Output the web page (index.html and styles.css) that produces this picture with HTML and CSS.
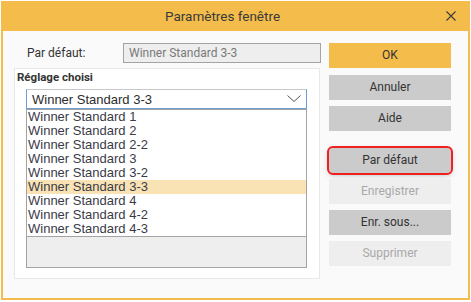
FILE: index.html
```html
<!DOCTYPE html>
<html>
	<head>
		<meta charset="utf-8">
		<title>Paramètres fenêtre</title>
		<link rel="stylesheet" href="styles.css">
	</head>
	<body>
		<!-- fenêtre -->
		<div class="window">
			<div class="titlebar">
				<div class="title">Paramètres fenêtre</div>
				<div class="close">
					<svg width="10" height="10" viewBox="0 0 10 10">
						<path d="M0.5 0.5 L9.5 9.5 M9.5 0.5 L0.5 9.5" stroke="#3a3a3a" stroke-width="1.1" fill="none"/>
					</svg>
				</div>
			</div>

			<div class="content">
				<!-- colonne gauche -->
				<div class="left">
					<div class="row">
						<span class="label">Par défaut:</span>
						<div class="readonly">Winner Standard 3-3</div>
					</div>

					<div class="group">
						<div class="group-title">Réglage choisi</div>
						<div class="combo">
							<span>Winner Standard 3-3</span>
							<svg width="14" height="7" viewBox="0 0 14 7">
								<path d="M0.5 0.5 L7 6.5 L13.5 0.5" stroke="#555" stroke-width="1" fill="none"/>
							</svg>
						</div>
						<div class="listbox">
							<ul class="items">
								<li>Winner Standard 1</li>
								<li>Winner Standard 2</li>
								<li>Winner Standard 2-2</li>
								<li>Winner Standard 3</li>
								<li>Winner Standard 3-2</li>
								<li class="selected">Winner Standard 3-3</li>
								<li>Winner Standard 4</li>
								<li>Winner Standard 4-2</li>
								<li>Winner Standard 4-3</li>
							</ul>
							<div class="empty"></div>
						</div>
					</div>
				</div>

				<!-- boutons -->
				<div class="buttons">
					<a class="btn primary" href="javascript:;">OK</a>
					<a class="btn" href="javascript:;">Annuler</a>
					<a class="btn" href="javascript:;">Aide</a>
					<a class="btn focused" href="javascript:;">Par défaut</a>
					<a class="btn disabled" href="javascript:;">Enregistrer</a>
					<a class="btn" href="javascript:;">Enr. sous...</a>
					<a class="btn disabled" href="javascript:;">Supprimer</a>
				</div>
			</div>
		</div>
	</body>
</html>
```

FILE: styles.css
```css
*{
	margin: 0;
	padding: 0;
	box-sizing: border-box;
}

body{
	padding: 1px;
	background-color: #ffffff;
	font-family: Roboto, "Noto Sans", sans-serif;
	font-size: 12px;
	color: #333333;
}

.window{
	width: 469px;
	height: 299px;
	background-color: #f4bd4b;
	padding: 0 2px 2px 2px;
	display: flex;
	flex-direction: column;
}

/* barre de titre */
.titlebar{
	height: 30px;
	display: flex;
	align-items: center;
}

.title{
	flex: 1;
	text-align: center;
	font-size: 13.5px;
	color: #3a3a3a;
}

.close{
	width: 26px;
	display: flex;
	padding-left: 4px;
	padding-bottom: 1px;
}

.content{
	flex: 1;
	background-color: #fafafa;
	display: flex;
	padding: 12px 0 0 11px;
	gap: 8px;
}

.left{
	width: 307px;
}

.row{
	height: 20px;
	display: flex;
	align-items: center;
	margin-bottom: 5px;
}

.label{
	width: 109px;
	padding-left: 13px;
}

.readonly{
	flex: 1;
	height: 20px;
	background-color: #eeeeee;
	border: 1px solid #a3a3a3;
	color: #7a7a7a;
	padding-left: 5px;
	line-height: 18px;
}

/* groupe réglage */
.group{
	width: 306px;
	height: 211px;
	background-color: #ffffff;
	border: 1px solid #e8e8e8;
	padding: 0 12px 0 11px;
}

.group-title{
	font-weight: bold;
	font-size: 11.5px;
	height: 20px;
	line-height: 17px;
	margin-left: -9px;
}

.combo{
	height: 20px;
	border: 1px solid #6f9bd6;
	border-top-color: #c8c8c8;
	display: flex;
	align-items: center;
	justify-content: space-between;
	padding: 0 5px 0 5px;
	font-family: "Liberation Sans", Arial, sans-serif;
	font-size: 13px;
	color: #2c2c2c;
}

.combo svg{
	margin-top: -1px;
}

.listbox{
	height: 159px;
	border: 1px solid #a3a3a3;
	border-top: none;
	display: flex;
	flex-direction: column;
}

.items{
	list-style: none;
	border-top: 1px solid #a3a3a3;
	border-bottom: 1px solid #a3a3a3;
	font-family: "Liberation Sans", Arial, sans-serif;
	font-size: 13px;
	color: #3b3b48;
}

.items li{
	height: 14px;
	line-height: 14px;
	padding-left: 1px;
}

.items .selected{
	background-color: #f9e3b4;
}

.empty{
	flex: 1;
	background-color: #eeeeee;
}

/* boutons à droite */
.buttons{
	width: 122px;
	display: flex;
	flex-direction: column;
}

.btn{
	display: block;
	height: 25px;
	line-height: 25px;
	text-align: center;
	text-decoration: none;
	color: #333333;
	background-color: #cbcbcb;
	margin-bottom: 6px;
}

.btn.primary{
	background-color: #f4bd4b;
	margin-bottom: 7px;
}

.btn.focused{
	margin-top: 11px;
	outline: 2px solid #ee2020;
	outline-offset: 0px;
	border-radius: 4px;
	box-shadow: 0 2px 6px rgba(0, 0, 0, 0.25);
}

.btn.disabled{
	background-color: #eeeeee;
	color: #a9a9a9;
}
```
